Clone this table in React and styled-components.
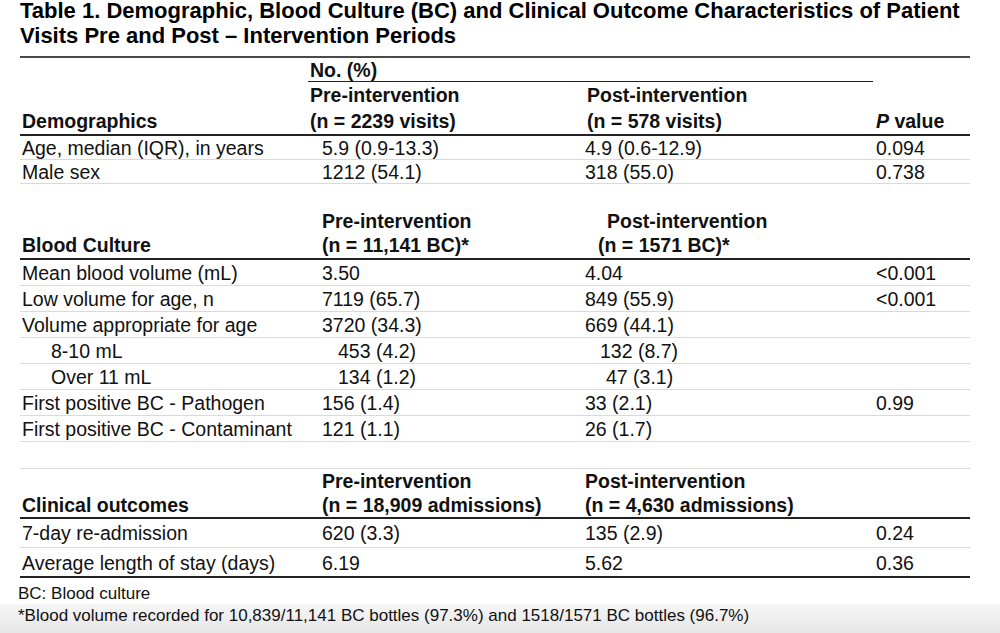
import React from 'react';
import styled, {createGlobalStyle} from 'styled-components';

const GlobalStyle = createGlobalStyle`
  html, body {
    margin: 0;
    padding: 0;
    background: #fff;
  }
`;

const COLS = '288px 277px 291px 94px';

const Page = styled.div`
  min-height: 100vh;
  display: flex;
  flex-direction: column;
  font-family: "Liberation Sans", Arial, sans-serif;
  color: #111;
`;

const Title = styled.h1`
  margin: 0 20px;
  font-size: 22px;
  font-weight: 700;
  color: #000;
`;

const TitleLine = styled.span`
  display: block;
  line-height: ${p => p.$lh}px;
  white-space: nowrap;
`;

const Table = styled.div`
  margin: 7px 20px 0;
  width: 950px;
  border-top: 2px solid #4a4a4a;
  font-size: 19.5px;
`;

const SpanRow = styled.div`
  display: grid;
  grid-template-columns: ${COLS};
  padding-top: 2px;
  line-height: 21px;
  font-weight: 700;
`;

const Spanner = styled.div`
  grid-column: 2 / 4;
  margin-right: 3px;
  padding-left: 2px;
  border-bottom: 1px solid #222;
`;

const HeadRow = styled.div`
  display: grid;
  grid-template-columns: ${COLS};
  align-items: end;
  box-sizing: border-box;
  padding-top: ${p => p.$top || 0}px;
  padding-bottom: ${p => p.$bottom || 0}px;
  line-height: ${p => p.$lh}px;
  font-weight: 700;
  border-top: ${p => (p.$ruled ? '1px solid #dadada' : 'none')};
  border-bottom: 2px solid #222;
`;

const Row = styled.div`
  display: grid;
  grid-template-columns: ${COLS};
  align-items: end;
  box-sizing: border-box;
  height: ${p => p.$h}px;
  padding-bottom: ${p => p.$pb || 0}px;
  line-height: 22px;
  border-bottom: ${p => (p.$dark ? '2px solid #222' : '1px solid #dadada')};
`;

const Gap = styled.div`
  height: 26px;
`;

const Cell = styled.div`
  padding-left: ${p => p.$in || 0}px;
  white-space: nowrap;
`;

const Stack = styled.div`
  display: flex;
  flex-direction: column;
`;

const Line = styled.span`
  padding-left: ${p => p.$in || 0}px;
  white-space: nowrap;
`;

const Note = styled.div`
  margin-top: 5px;
  padding-left: 18px;
  font-size: 17px;
  line-height: 21px;
`;

const Band = styled.div`
  flex: 1;
  padding: 1px 0 0 18px;
  font-size: 17px;
  line-height: 21px;
  background: linear-gradient(#f6f6f6, #e6e6e6);
`;

const demographics = [
    {label: 'Age, median (IQR), in years', pre: '5.9 (0.9-13.3)', post: '4.9 (0.6-12.9)', p: '0.094', h: 24},
    {label: 'Male sex', pre: '1212 (54.1)', post: '318 (55.0)', p: '0.738', h: 24},
];

const bloodCulture = [
    {label: 'Mean blood volume (mL)', pre: '3.50', post: '4.04', p: '<0.001'},
    {label: 'Low volume for age, n', pre: '7119 (65.7)', post: '849 (55.9)', p: '<0.001'},
    {label: 'Volume appropriate for age', pre: '3720 (34.3)', post: '669 (44.1)', p: ''},
    {label: '8-10 mL', pre: '453 (4.2)', post: '132 (8.7)', p: '', sub: true, postIn: 15},
    {label: 'Over 11 mL', pre: '134 (1.2)', post: '47 (3.1)', p: '', sub: true, postIn: 21},
    {label: 'First positive BC - Pathogen', pre: '156 (1.4)', post: '33 (2.1)', p: '0.99'},
    {label: 'First positive BC - Contaminant', pre: '121 (1.1)', post: '26 (1.7)', p: ''},
];

const outcomes = [
    {label: '7-day re-admission', pre: '620 (3.3)', post: '135 (2.9)', p: '0.24', h: 29, pb: 3},
    {label: 'Average length of stay (days)', pre: '6.19', post: '5.62', p: '0.36', h: 30, pb: 2, dark: true},
];

export default function App() {
    return (
        <Page>
            <GlobalStyle/>
            <Title>
                <TitleLine $lh={22}>
                    Table 1. Demographic, Blood Culture (BC) and Clinical Outcome Characteristics of Patient
                </TitleLine>
                <TitleLine $lh={27}>Visits Pre and Post – Intervention Periods</TitleLine>
            </Title>

            <Table>
                <SpanRow>
                    <div/>
                    <Spanner>No. (%)</Spanner>
                </SpanRow>
                <HeadRow $lh={26}>
                    <Cell $in={2}>Demographics</Cell>
                    <Stack>
                        <Line $in={2}>Pre-intervention</Line>
                        <Line $in={2}>(n = 2239 visits)</Line>
                    </Stack>
                    <Stack>
                        <Line $in={2}>Post-intervention</Line>
                        <Line $in={2}>(n = 578 visits)</Line>
                    </Stack>
                    <Cell><i>P</i> value</Cell>
                </HeadRow>
                {demographics.map(r => (
                    <Row key={r.label} $h={r.h}>
                        <Cell $in={2}>{r.label}</Cell>
                        <Cell $in={14}>{r.pre}</Cell>
                        <Cell>{r.post}</Cell>
                        <Cell>{r.p}</Cell>
                    </Row>
                ))}

                <HeadRow $lh={24} $top={25} $bottom={1}>
                    <Cell $in={2}>Blood Culture</Cell>
                    <Stack>
                        <Line $in={14}>Pre-intervention</Line>
                        <Line $in={14}>(n = 11,141 BC)*</Line>
                    </Stack>
                    <Stack>
                        <Line $in={22}>Post-intervention</Line>
                        <Line $in={13}>(n = 1571 BC)*</Line>
                    </Stack>
                    <div/>
                </HeadRow>
                {bloodCulture.map(r => (
                    <Row key={r.label} $h={26} $pb={1}>
                        <Cell $in={r.sub ? 31 : 2}>{r.label}</Cell>
                        <Cell $in={r.sub ? 30 : 14}>{r.pre}</Cell>
                        <Cell $in={r.postIn || 0}>{r.post}</Cell>
                        <Cell>{r.p}</Cell>
                    </Row>
                ))}

                <Gap/>
                <HeadRow $lh={24} $ruled>
                    <Cell $in={2}>Clinical outcomes</Cell>
                    <Stack>
                        <Line $in={14}>Pre-intervention</Line>
                        <Line $in={14}>(n = 18,909 admissions)</Line>
                    </Stack>
                    <Stack>
                        <Line>Post-intervention</Line>
                        <Line>(n = 4,630 admissions)</Line>
                    </Stack>
                    <div/>
                </HeadRow>
                {outcomes.map(r => (
                    <Row key={r.label} $h={r.h} $pb={r.pb} $dark={r.dark}>
                        <Cell $in={2}>{r.label}</Cell>
                        <Cell $in={14}>{r.pre}</Cell>
                        <Cell>{r.post}</Cell>
                        <Cell>{r.p}</Cell>
                    </Row>
                ))}
            </Table>

            <Note>BC: Blood culture</Note>
            <Band>*Blood volume recorded for 10,839/11,141 BC bottles (97.3%) and 1518/1571 BC bottles (96.7%)</Band>
        </Page>
    );
}
